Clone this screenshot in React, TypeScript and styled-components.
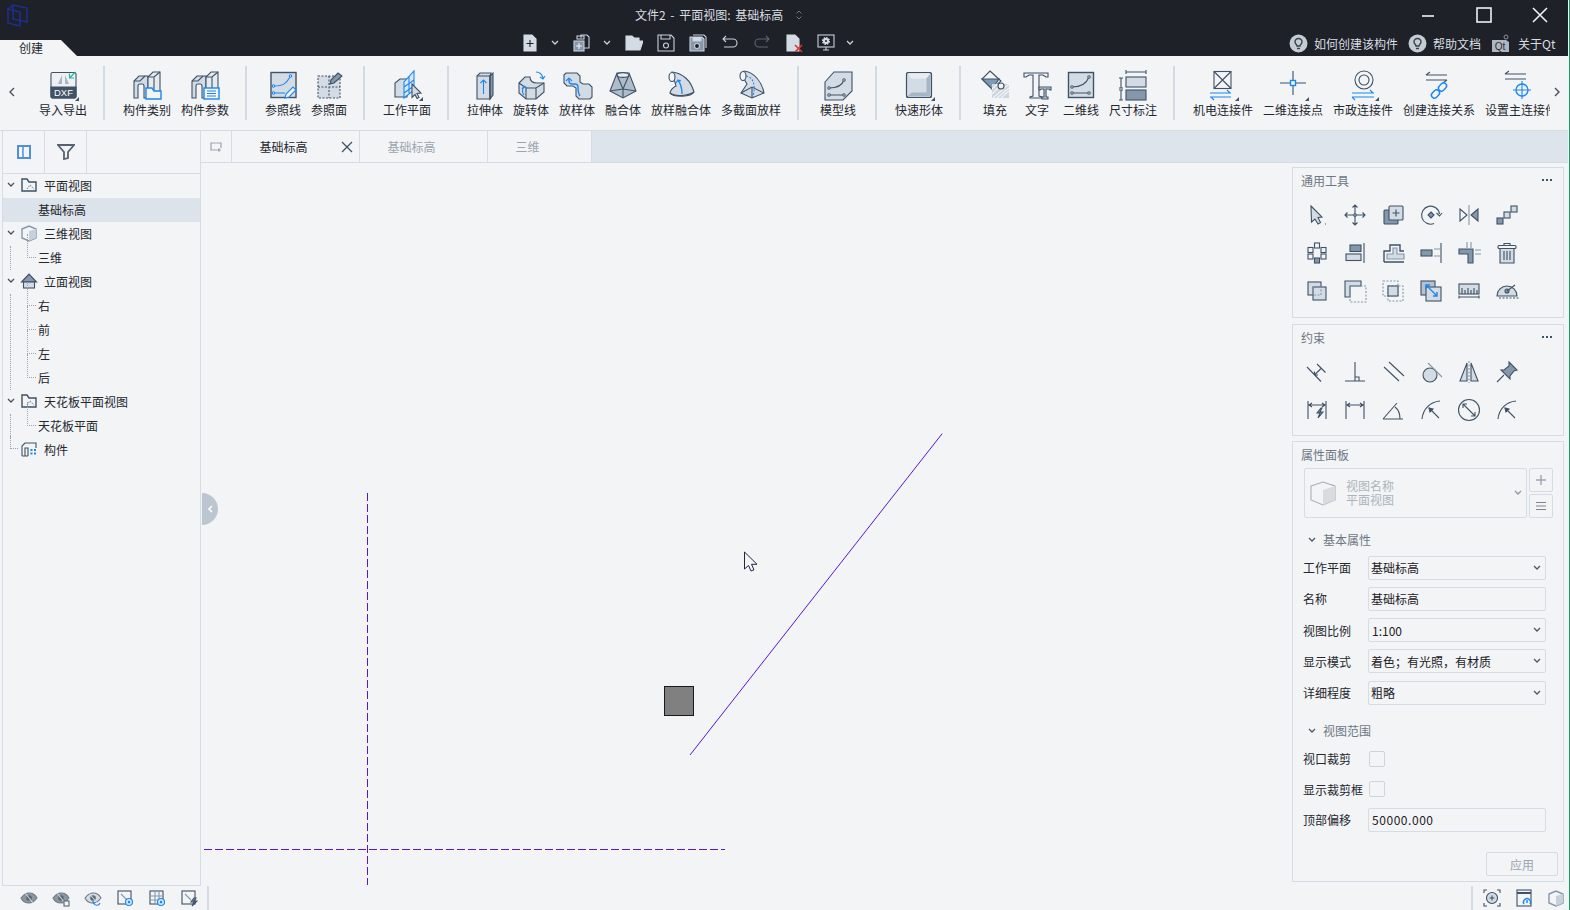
import React from "react";
import styled, { createGlobalStyle } from "styled-components";

const D = "#3f5266";
const L = "#d3dce5";
const M = "#8597aa";
const B = "#1b87f0";

const GlobalStyle = createGlobalStyle`
  html, body, #root { margin: 0; padding: 0; height: 100%; }
  body {
    background: #f3f4f6;
    color: #23282e;
    font-family: "Noto Sans CJK SC", "Liberation Sans", sans-serif;
    font-size: 12px;
    overflow: hidden;
  }
`;

const Glyph = styled.svg.attrs<{ $s?: number }>((p) => ({
  width: p.$s ?? 24,
  height: p.$s ?? 24,
  viewBox: `0 0 ${p.$s ?? 24} ${p.$s ?? 24}`,
}))<{ $s?: number; $ink?: string }>`
  display: block;
  flex: none;
  fill: none;
  stroke: ${(p) => p.$ink ?? D};
  stroke-width: 1.1;
`;

const Big = ({ children }: { children: React.ReactNode }) => <Glyph $s={32}>{children}</Glyph>;
const Small = ({ children }: { children: React.ReactNode }) => <Glyph $s={24}>{children}</Glyph>;
const Mini = ({ children }: { children: React.ReactNode }) => <Glyph $s={18}>{children}</Glyph>;
const Dark = ({ children, dim }: { children: React.ReactNode; dim?: boolean }) => (
  <Glyph $s={18} $ink={dim ? "#5c6670" : "#c9d2dc"}>{children}</Glyph>
);
const More = () => <path d="M32 28v4h-4z" fill={D} stroke="none" />;

/* ribbon icons */
const Blocks = () => (
  <>
    <path d="M3 29V12l5-5h9v22h-4V17a2 2 0 0 0-2-2H9a2 2 0 0 0-2 2v12z" fill={L} />
    <path d="M17 29V8l5-5h7v23" fill="#e6ebf0" />
    <path d="M3 12h6l5-5M17 8h6l6-5M23 8v14" />
  </>
);
const IcDxf = () => (
  <Big>
    <rect x="4" y="3.5" width="25" height="25.5" rx="1.5" fill="#eef1f4" />
    <path d="M4 18h25v9.5a1.5 1.5 0 0 1-1.5 1.5h-22A1.5 1.5 0 0 1 4 27.5z" fill={D} />
    <text x="16.5" y="27" fontSize="9.5" fill="#fff" stroke="none" textAnchor="middle" fontFamily="Liberation Sans">DXF</text>
    <path d="M15 6l-4 9h4zM18 6l4 9h-4z" fill="#aab6c2" stroke="none" />
    <path d="M28.5 3l-6 6m0-4.5V9h4.5" stroke="#22b59b" fill="#eef1f4" />
    <More />
  </Big>
);
const IcCategory = () => (
  <Big>
    <Blocks />
    <path d="M15 30V19h6l2 3h7v8z" fill="#f3f4f6" stroke={B} strokeWidth="1.4" />
  </Big>
);
const IcParams = () => (
  <Big>
    <Blocks />
    <rect x="15" y="19" width="15" height="11" fill="#f3f4f6" stroke={B} strokeWidth="1.4" />
    <path d="M18 22h9M18 24.5h9M18 27h9" stroke={B} />
  </Big>
);
const IcRefLine = () => (
  <Big>
    <rect x="4" y="3.5" width="25" height="25" fill={L} strokeWidth="1.4" />
    <path d="M7 17c9 0 12-2 16-9M7 24h11" stroke={B} />
    <circle cx="6.5" cy="17" r="1.2" fill="#fff" stroke={B} />
    <circle cx="6.5" cy="24" r="1.2" fill="#fff" stroke={B} />
    <circle cx="23.5" cy="7" r="1.2" fill="#fff" stroke={B} />
    <path d="M18 29l1-4 7-7 3 3-7 7z" fill="#f3f4f6" stroke={B} />
  </Big>
);
const IcRefFace = () => (
  <Big>
    <rect x="5" y="7" width="22" height="22" fill={L} strokeDasharray="2 1.5" />
    <path d="M5 18h22M16 7v22" strokeDasharray="2 1.5" />
    <path d="M18 11l7-7 4 3-8 7-4 1z" fill={M} />
  </Big>
);
const IcWorkPlane = () => (
  <Big>
    <path d="M4 28V14l5-4h7v18z" fill={L} />
    <path d="M13 29V13L23 2v19l-10 8zM18 7v17M13 18l10-7M13 24l10-7" fill="#d8e8f8" stroke={B} />
    <path d="M21 15l9 9-4 .5 2 4-2 1-2-4-3 3z" fill={L} />
    <More />
  </Big>
);
const IcExtrude = () => (
  <Big>
    <path d="M8 30V7l3-3h11l-1 3v23z" fill={L} />
    <path d="M21 7l3-3v22l-3 4z" fill={M} />
    <path d="M8 7h13M21 7v23" />
    <path d="M14.5 25V11m-3 3l3-3 3 3" stroke={B} />
  </Big>
);
const IcRevolve = () => (
  <Big>
    <path d="M4 14l6-6h5c0 4 3 6 7 6h7v9l-8 7H11l-7-6z" fill={L} />
    <path d="M4 14l7 5h10l8-5M21 19v11M11 19v11" />
    <path d="M21 3c4 0 6 2 7 6m-3-1l3 2 2-3M9 26c-2-2-2-6 0-8m-2 2l2-3 3 2" stroke={B} />
  </Big>
);
const IcSweep = () => (
  <Big>
    <path d="M3 6l2-2h11l3 3v6l3 2h6l3 3v10l-2 2H18l-3-3v-8l-3-2H6l-3-3z" fill={L} />
    <path d="M8 9v3c0 2 1 3 3 3h3c2 0 3 1 3 3 0 2 0 6 2 9" stroke={B} strokeWidth="1.4" />
    <path d="M5 12l3-3 3 3" stroke={B} />
  </Big>
);
const IcBlend = () => (
  <Big>
    <path d="M10 4h12l7 18-13 7-13-7z" fill="#aebccb" />
    <ellipse cx="16" cy="6" rx="6" ry="2.4" fill="#e6ebf0" />
    <path d="M10 6L16 20l6-14M3 22l13-2 13 2M16 20v9" />
  </Big>
);
const IcSweepBlend = () => (
  <Big>
    <path d="M7 3c11 1 19 9 22 20-3 5-20 6-24 1 1-4 4-6 6-7z" fill={L} />
    <ellipse cx="7" cy="8" rx="3" ry="4.5" fill="#f3f4f6" />
    <path d="M5 24c5 4 18 3 24-1" />
    <path d="M17 25c0-6-1-10-4-14m-2 3l2-3 3 1" stroke={B} strokeWidth="1.3" />
  </Big>
);
const IcMultiSweep = () => (
  <Big>
    <path d="M9 2c10 1 18 11 20 22l-12 5-11-5 6-9-6-10z" fill={L} />
    <ellipse cx="8" cy="7" rx="3" ry="4.5" fill="#f3f4f6" />
    <path d="M17 29V18M6 24l11-6 12 6" />
    <path d="M11 7c7 1 10 8 7 21" stroke={B} strokeDasharray="2 1.5" />
  </Big>
);
const IcModelLine = () => (
  <Big>
    <path d="M3 13l9-10h18v19l-9 9H3z" fill={L} />
    <path d="M7 19c8 0 13-2 15-8M7 26h15" />
    <circle cx="7" cy="19" r="1.2" fill="#fff" />
    <circle cx="22" cy="11" r="1.2" fill="#fff" />
    <circle cx="7" cy="26" r="1.2" fill="#fff" />
    <circle cx="22" cy="26" r="1.2" fill="#fff" />
  </Big>
);
const IcQuick = () => (
  <Big>
    <rect x="3.5" y="3.5" width="25" height="25" rx="2" fill={L} />
    <path d="M4.500 4.500h23l-4 5H8.500z" fill="#e9edf1" stroke="none" />
    <path d="M23.500 9.500l4-5v23l-4-4z" fill="#a7b6c6" stroke="none" />
    <path d="M4.500 27.500l4-4h15l4 4z" fill="#a7b6c6" stroke="none" />
    <rect x="3.500" y="3.500" width="25" height="25" rx="2" />
    <More />
  </Big>
);
const IcFill = () => (
  <Big>
    <path d="M11 2l11 10-9 8L3 10z" fill="#f3f4f6" />
    <path d="M3 10h17l-7 10z" fill="#7f9ab8" />
    <path d="M13 29h17V15H13z" fill="#cdd5de" stroke="none" />
    <path d="M14 29l16-14M18 29l12-10M22 29l8-7M13 25l10-10M13 20l5-5" stroke="#f3f4f6" />
    <circle cx="22" cy="17" r="3" fill="#f3f4f6" />
  </Big>
);
const IcText = () => (
  <Big>
    <path d="M3 8V4h24v4h-2l-3-2h-4v21l3 1v1H9v-1l3-1V6H8L5 8z" fill="#f3f4f6" />
    <path d="M18 18h12v3h-1l-1-1h-3v8h2v2h-6v-2h2v-8h-3l-1 1h-1z" fill={L} />
  </Big>
);
const IcLine2d = () => (
  <Big>
    <rect x="3.5" y="3.5" width="25" height="25" fill={L} strokeWidth="1.4" />
    <path d="M7 18c8 0 14-2 17-10M7 24h17" />
    <circle cx="7" cy="18" r="1.2" fill="#fff" />
    <circle cx="24" cy="8" r="1.2" fill="#fff" />
    <circle cx="7" cy="24" r="1.2" fill="#fff" />
    <circle cx="24" cy="24" r="1.2" fill="#fff" />
  </Big>
);
const IcDimension = () => (
  <Big>
    <path d="M9 3h20M9 1v4M29 1v4M2 9h4M2 19h4M2 21h4M2 31h4M4 9v10M4 21v10" />
    <rect x="9" y="8" width="20" height="10" fill={L} />
    <rect x="9" y="21" width="20" height="10" fill={M} />
  </Big>
);
const IcMep = () => (
  <Big>
    <rect x="7" y="2.5" width="17" height="17" fill="#f3f4f6" />
    <path d="M7 2.500l17 17M24 2.500l-17 17" />
    <path d="M3 24h21M3 28h21M20 21l3 3M7 31l-3-3" stroke={B} />
    <More />
  </Big>
);
const IcPoint2d = () => (
  <Big>
    <path d="M16 2v24M3 14h26" />
    <rect x="13.5" y="11.5" width="5" height="5" fill="#f3f4f6" stroke={B} strokeWidth="1.4" />
    <More />
  </Big>
);
const IcCivil = () => (
  <Big>
    <circle cx="17" cy="11" r="9" fill="#f3f4f6" />
    <circle cx="17" cy="11" r="5" />
    <path d="M5 24h22M5 28h22M23 21l3 3M8 31l-3-3" stroke={B} />
    <More />
  </Big>
);
const IcLink = () => (
  <Big>
    <path d="M3 6h21M3 11h21M3 6l4-3M24 11l-4 3" />
    <g stroke={B} strokeWidth="1.4">
      <rect x="8" y="22" width="9" height="6" rx="3" transform="rotate(-45 12.5 25)" />
      <rect x="15" y="15" width="9" height="6" rx="3" transform="rotate(-45 19.5 18)" />
    </g>
  </Big>
);
const IcMain = () => (
  <Big>
    <path d="M3 5h21M3 10h21M3 5l4-3" />
    <circle cx="20" cy="21" r="6" stroke={B} strokeWidth="1.4" />
    <path d="M20 12v18M11 21h18" stroke={B} />
  </Big>
);

/* tool palette icons */
const TSelect = () => (
  <Small>
    <path d="M6 3l11 11-4 .5 2.500 5-2.500 1.500-3-5-3.500 3z" fill={L} />
    <path d="M20 21h1" />
  </Small>
);
const TMove = () => (
  <Small>
    <path d="M12 2v20M2 12h20M9.500 4.500L12 2l2.500 2.500M9.500 19.500L12 22l2.500-2.500M4.500 9.500L2 12l2.500 2.500M19.500 9.500L22 12l-2.500 2.500" />
    <circle cx="12" cy="12" r="1.300" fill={L} />
  </Small>
);
const TCopy = () => (
  <Small>
    <rect x="3" y="7" width="14" height="14" rx="1" fill={M} />
    <rect x="8" y="3" width="14" height="14" rx="1" fill={L} />
    <path d="M15 6.500v7M11.500 10h7" />
  </Small>
);
const TRotate = () => (
  <Small>
    <path d="M15 20.500A9 9 0 1 1 20.500 11" />
    <path d="M17.500 10l3 3 2.500-3" />
    <path d="M12 9l3 3-3 3-3-3z" fill={M} />
  </Small>
);
const TMirror = () => (
  <Small>
    <path d="M12 2v20" stroke={M} />
    <path d="M3 6v12l7-6z" />
    <path d="M21 6v12l-7-6z" fill={M} />
  </Small>
);
const TDiag = () => (
  <Small>
    <rect x="2" y="15" width="6" height="6" fill={M} />
    <rect x="9" y="9" width="6" height="6" fill={L} />
    <rect x="16" y="3" width="6" height="6" fill={L} />
  </Small>
);
const TCircle = () => (
  <Small>
    <rect x="9.500" y="2" width="5" height="5" fill="#f3f4f6" />
    <rect x="3" y="6.500" width="5" height="5" fill="#f3f4f6" />
    <rect x="3" y="13" width="5" height="5" fill="#f3f4f6" />
    <rect x="16" y="6.500" width="5" height="5" fill="#f3f4f6" />
    <rect x="16" y="13" width="5" height="5" fill="#f3f4f6" />
    <rect x="9.500" y="17" width="5" height="5" fill={M} />
  </Small>
);
const TAlign = () => (
  <Small>
    <path d="M21 2v20" />
    <rect x="7" y="4" width="11" height="6.500" fill={M} />
    <rect x="3" y="13" width="15" height="6.500" fill={L} />
  </Small>
);
const TOffset = () => (
  <Small>
    <path d="M3 21V10h6V4h10v6h4M3 21h20" strokeWidth="1.400" />
    <path d="M6 18v-5h6V7h4v6h7v5z" fill={L} stroke={M} />
  </Small>
);
const TTrim = () => (
  <Small>
    <rect x="2" y="9" width="11" height="6" fill={M} />
    <path d="M15 8h6M15 15h6" stroke={M} />
    <path d="M22 2v20" />
  </Small>
);
const TCorner = () => (
  <Small>
    <path d="M2 8h14v14h-5V13H2z" fill={M} />
    <path d="M10 1v6M14 1v6M18 9h6M18 13h6" stroke={M} />
  </Small>
);
const TTrash = () => (
  <Small>
    <path d="M5 7v15h14V7" fill={L} />
    <rect x="3" y="4.500" width="18" height="3" rx="1" fill="#f3f4f6" />
    <path d="M9 4.500V2.500h6v2M9 10v9M12 10v9M15 10v9" />
  </Small>
);
const TUnion = () => (
  <Small>
    <rect x="3" y="3" width="13" height="13" fill={L} />
    <rect x="8" y="8" width="13" height="13" fill={L} />
    <rect x="8" y="8" width="8" height="8" stroke={M} strokeDasharray="2 1.500" />
  </Small>
);
const TSubtract = () => (
  <Small>
    <path d="M2 2h16v5H7v11H2z" fill={L} />
    <rect x="7" y="7" width="16" height="16" stroke={M} strokeDasharray="2 1.500" />
  </Small>
);
const TIntersect = () => (
  <Small>
    <rect x="2" y="2" width="15" height="15" stroke={M} strokeDasharray="2 1.500" />
    <rect x="7" y="7" width="15" height="15" stroke={M} strokeDasharray="2 1.500" />
    <rect x="7" y="7" width="10" height="10" fill={L} />
  </Small>
);
const TScale = () => (
  <Small>
    <rect x="2" y="2" width="14" height="14" fill="#b5c1ce" />
    <rect x="7" y="8" width="15" height="14" fill={L} />
    <path d="M7 6l11 11M7 10V6h4M18 13v4h-4" stroke={B} strokeWidth="1.400" />
  </Small>
);
const TRuler = () => (
  <Small>
    <rect x="2" y="5" width="20" height="10" fill={L} />
    <path d="M5 9v6M8 11v4M11 9v6M14 11v4M17 9v6M20 11v4" />
    <path d="M2 18h20M2 16.500v3M22 16.500v3" />
  </Small>
);
const TProtractor = () => (
  <Small>
    <path d="M2 17a10 10 0 0 1 20 0z" fill={L} />
    <circle cx="12" cy="12" r="2" fill={M} />
    <path d="M4 19h20" strokeDasharray="2 1.500" />
    <path d="M12 12L20 6" />
  </Small>
);
const CParallelDim = () => (
  <Small>
    <path d="M2 7l14 14.500M12 4l8.500 8.500M9.500 15l6.500-6.500M9.500 15h3.500M9.500 15v-3.500" />
  </Small>
);
const CPerp = () => (
  <Small>
    <path d="M2 21h20M12 2v19M12 17h4v4" />
  </Small>
);
const CParallel = () => (
  <Small>
    <path d="M3 7l15 14M8 2l15 14" />
  </Small>
);
const CTangent = () => (
  <Small>
    <circle cx="11" cy="15" r="7" fill={L} />
    <path d="M9 3l14 14" stroke={M} />
  </Small>
);
const CSymmetry = () => (
  <Small>
    <path d="M10 3v18H3z" fill={L} />
    <path d="M14 3v18h7z" fill={L} />
    <path d="M12 1v22" stroke={M} strokeDasharray="2 1.500" />
  </Small>
);
const CPin = () => (
  <Small>
    <path d="M14 2l8 8-3 1-4 5 0 3-9-9 3 0 5-4z" fill={M} />
    <path d="M9 15l-7 7" />
  </Small>
);
const CDimLock = () => (
  <Small>
    <path d="M3 3v18M21 3v18M4 7h16M7 5L4 7l3 2M17 5l3 2-3 2" />
    <path d="M16 10l-4 5h3l-2 5 5-6h-3l2-4z" fill={M} />
  </Small>
);
const CDim = () => (
  <Small>
    <path d="M3 3v18M21 3v18M4 7h16M7 5L4 7l3 2M17 5l3 2-3 2" />
  </Small>
);
const CAngle = () => (
  <Small>
    <path d="M2 21h20M2 21L16 5M14 9c4 3 5 7 5 12" />
  </Small>
);
const CRadius = () => (
  <Small>
    <path d="M3 21C4 11 11 4 21 3" />
    <path d="M10 10l10 10" />
    <path d="M10 10l4 1-3 3z" fill={D} />
  </Small>
);
const CDiameter = () => (
  <Small>
    <circle cx="12" cy="12" r="10.500" />
    <path d="M6 6l12 12M6 10V6h4M18 14v4h-4" />
  </Small>
);

/* tree, sidebar and status icons */
const TreeFolder = () => (
  <Mini>
    <path d="M2 15V3h5l2 3h7v9z" fill="#f3f4f6" strokeWidth="1.400" />
    <path d="M7 13l3-4 4 4" strokeDasharray="1.500 1" stroke={M} />
  </Mini>
);
const TreeCube = () => (
  <Mini>
    <path d="M2 5l7-3 7 3v9l-7 3-7-3z" fill="#f3f4f6" stroke={M} strokeWidth="1.400" />
    <path d="M9 7l7-2v9l-7 3z" fill="#c5d0db" stroke="none" />
  </Mini>
);
const TreeHouse = () => (
  <Mini>
    <path d="M1.500 10L9 2l7.500 8z" fill={M} />
    <rect x="3.500" y="10" width="11" height="6" fill={L} />
  </Mini>
);
const TreeParts = () => (
  <Mini>
    <path d="M2 16V6l3-3h11v5" fill="#f3f4f6" />
    <path d="M5 16V8h3v8M2 16h6" />
    <path d="M10.500 9h2v2h-2zM14 9h2v2h-2zM10.500 12.500h2v2h-2zM14 12.500h2v2h-2z" fill={B} stroke="none" />
  </Mini>
);
const EyeBase = ({ shade }: { shade?: boolean }) => (
  <>
    <path d="M1 9c3-4 6-5 8-5s6 1 8 5c-3 4-6 5-8 5s-6-1-8-5z" fill={shade ? "#8a96a2" : L} stroke="#6f7b87" />
    <circle cx="9" cy="9" r="2.800" fill="#5b6672" stroke="none" />
    <path d="M5 4l8 10" stroke="#cfd6dd" />
  </>
);
const Bulb = () => (
  <svg width="19" height="19" viewBox="0 0 19 19">
    <circle cx="9.500" cy="9.500" r="9" fill="#c4ccd4" />
    <path d="M6 8a3.500 3.500 0 0 1 7 0c0 2-2 2.500-2 4H8c0-1.500-2-2-2-4z" fill="none" stroke="#39424c" strokeWidth="1.400" />
    <path d="M8 14.500h3" stroke="#39424c" strokeWidth="1.400" />
  </svg>
);

const ribbonGroups: { extra: number; items: { label: string; w: number; icon: React.FC; clip?: boolean }[] }[] = [
  { extra: 0, items: [{ label: "导入导出", w: 48, icon: IcDxf }] },
  {
    extra: 1,
    items: [
      { label: "构件类别", w: 48, icon: IcCategory },
      { label: "构件参数", w: 48, icon: IcParams },
    ],
  },
  {
    extra: 1,
    items: [
      { label: "参照线", w: 36, icon: IcRefLine },
      { label: "参照面", w: 36, icon: IcRefFace },
    ],
  },
  { extra: 1, items: [{ label: "工作平面", w: 48, icon: IcWorkPlane }] },
  {
    extra: 1,
    items: [
      { label: "拉伸体", w: 36, icon: IcExtrude },
      { label: "旋转体", w: 36, icon: IcRevolve },
      { label: "放样体", w: 36, icon: IcSweep },
      { label: "融合体", w: 36, icon: IcBlend },
      { label: "放样融合体", w: 60, icon: IcSweepBlend },
      { label: "多截面放样", w: 60, icon: IcMultiSweep },
    ],
  },
  { extra: 1, items: [{ label: "模型线", w: 42, icon: IcModelLine }] },
  { extra: 1, items: [{ label: "快速形体", w: 48, icon: IcQuick }] },
  {
    extra: 1,
    items: [
      { label: "填充", w: 32, icon: IcFill },
      { label: "文字", w: 32, icon: IcText },
      { label: "二维线", w: 36, icon: IcLine2d },
      { label: "尺寸标注", w: 48, icon: IcDimension },
    ],
  },
  {
    extra: 1,
    items: [
      { label: "机电连接件", w: 60, icon: IcMep },
      { label: "二维连接点", w: 60, icon: IcPoint2d },
      { label: "市政连接件", w: 60, icon: IcCivil },
      { label: "创建连接关系", w: 72, icon: IcLink },
      { label: "设置主连接件", w: 65, icon: IcMain, clip: true },
    ],
  },
];

const general = [TSelect, TMove, TCopy, TRotate, TMirror, TDiag, TCircle, TAlign, TOffset, TTrim, TCorner, TTrash, TUnion, TSubtract, TIntersect, TScale, TRuler, TProtractor];
const constraints = [CParallelDim, CPerp, CParallel, CTangent, CSymmetry, CPin, CDimLock, CDim, CAngle, CRadius, CDiameter, CRadius];

const Page = styled.div`
  width: 1570px;
  height: 910px;
  display: flex;
  flex-direction: column;
  border-right: 1px solid #1d9a68;
  padding-right: 1px;
  box-sizing: border-box;
  overflow: hidden;
`;

/* title bar */
const TitleBar = styled.header`
  flex: none;
  height: 56px;
  background: #1e2127;
  color: #d9dee3;
`;
const TopRow = styled.div`
  height: 30px;
  display: flex;
  align-items: center;
`;
const Logo = styled.svg`
  width: 22px;
  height: 24px;
  margin: 0 0 0 6px;
  flex: none;
  fill: none;
  stroke: #1c2f8c;
  stroke-width: 1.5;
`;
const TitleText = styled.div`
  margin-left: 607px;
  line-height: 30px;
  white-space: nowrap;
  word-spacing: 2px;
`;
const UpDown = styled.svg`
  width: 8px;
  height: 12px;
  margin-left: 12px;
  fill: none;
  stroke: #6e7680;
  stroke-width: 1;
`;
const WindowControls = styled.div`
  margin-left: auto;
  display: flex;
`;
const WinButton = styled.div`
  width: 56px;
  height: 30px;
  display: flex;
  align-items: center;
  justify-content: center;
  svg {
    fill: none;
    stroke: #eef0f2;
    stroke-width: 1.6;
  }
`;
const BottomRow = styled.div`
  height: 26px;
  display: flex;
  align-items: flex-end;
`;
const AppTab = styled.div`
  width: 77px;
  height: 16px;
  margin-right: 437px;
  flex: none;
  background: #f3f4f6;
  color: #23282e;
  clip-path: polygon(0 0, 61px 0, 77px 100%, 0 100%);
  line-height: 16px;
  padding-left: 19px;
  box-sizing: border-box;
`;
const QuickBar = styled.div`
  display: flex;
  height: 26px;
  align-items: center;
`;
const QuickButton = styled.div<{ $w?: number }>`
  width: ${(p) => p.$w ?? 32}px;
  display: flex;
  justify-content: center;
`;
const QuickChevron = styled(QuickButton)`
  box-sizing: border-box;
  padding-right: 3px;
`;
const HelpLinks = styled.div`
  margin-left: auto;
  height: 26px;
  display: flex;
  align-items: center;
  width: 279px;
  flex: none;
  white-space: nowrap;
  overflow: hidden;
`;
const HelpLink = styled.div<{ $icon?: number }>`
  display: flex;
  align-items: center;
  gap: ${(p) => p.$icon ?? 6}px;
  margin-right: 10px;
  color: #d9dee3;
`;

/* ribbon */
const Ribbon = styled.nav`
  flex: none;
  height: 75px;
  position: relative;
  display: flex;
  padding-left: 5px;
  box-sizing: border-box;
  border-bottom: 1px solid #d4dce5;
  overflow: hidden;
`;
const RibbonArrow = styled.div`
  flex: none;
  width: 14px;
  margin-right: 20px;
  display: flex;
  align-items: center;
  justify-content: center;
  height: 72px;
`;
const RibbonArrowRight = styled(RibbonArrow)`
  position: absolute;
  right: 4px;
  top: 0;
  margin: 0;
`;
const RibbonGroup = styled.div`
  display: flex;
  gap: 10px;
  flex: none;
`;
const RibbonDivider = styled.div<{ $extra: number }>`
  flex: none;
  width: 2px;
  height: 54px;
  margin: 10px ${(p) => 17 + p.$extra}px 0 16px;
  background: #d2dae4;
`;
const RibbonItem = styled.div<{ $w: number; $clip?: boolean }>`
  width: ${(p) => p.$w}px;
  flex: none;
  display: flex;
  flex-direction: column;
  align-items: center;
  padding-top: 13px;
  overflow: ${(p) => (p.$clip ? "hidden" : "visible")};
`;
const RibbonLabel = styled.div<{ $clip?: boolean }>`
  line-height: 18px;
  white-space: nowrap;
  width: 100%;
  display: flex;
  justify-content: ${(p) => (p.$clip ? "flex-start" : "center")};
`;

/* main */
const Main = styled.div`
  flex: 1;
  min-height: 0;
  display: flex;
`;
const Sidebar = styled.aside`
  flex: none;
  width: 199px;
  margin-left: 2px;
  border-right: 1px solid #d4dce5;
  border-bottom: 1px solid #d4dce5;
  border-left: 1px solid #d4dce5;
  box-sizing: border-box;
`;
const SideTabs = styled.div`
  height: 42px;
  display: flex;
  border-bottom: 1px solid #d4dce5;
`;
const SideTab = styled.div`
  width: 41px;
  border-right: 1px solid #d4dce5;
  display: flex;
  align-items: center;
  justify-content: center;
`;
const TreeGroup = styled.div<{ $guide?: number }>`
  position: relative;
  &::before {
    content: "";
    position: absolute;
    left: 7px;
    top: 24px;
    height: ${(p) => p.$guide ?? 0}px;
    border-left: 1px dotted #9aa4ae;
  }
`;
const TreeHead = styled.div`
  height: 24px;
  display: flex;
  align-items: center;
  padding: 0 0 2px 4px;
  box-sizing: border-box;
`;
const Caret = styled.svg`
  width: 8px;
  height: 6px;
  margin-right: 5px;
  flex: none;
  fill: none;
  stroke: #46525e;
  stroke-width: 1.300;
`;
const TreeBranch = styled.div`
  width: 8px;
  height: 14px;
  margin: -14px 2px 0 3px;
  flex: none;
  border-left: 1px dotted #9aa4ae;
  border-bottom: 1px dotted #9aa4ae;
  box-sizing: border-box;
`;
const TreeIcon = styled.div`
  width: 18px;
  margin-right: 6px;
`;
const TreeLeaf = styled.div<{ $active?: boolean; $line?: boolean }>`
  height: 24px;
  line-height: 24px;
  padding-left: 35px;
  position: relative;
  background: ${(p) => (p.$active ? "#dde3ea" : "transparent")};
  &::before {
    content: "";
    display: ${(p) => (p.$line ? "block" : "none")};
    position: absolute;
    left: 24px;
    top: -12px;
    width: 9px;
    height: 24px;
    border-left: 1px dotted #9aa4ae;
    border-bottom: 1px dotted #9aa4ae;
    box-sizing: border-box;
  }
`;

const Content = styled.div`
  flex: 1;
  min-width: 0;
  display: flex;
  flex-direction: column;
`;
const TabBar = styled.div`
  flex: none;
  height: 32px;
  display: flex;
  background: #dee4eb;
  box-sizing: border-box;
  border-bottom: 1px solid #d4dce5;
`;
const TabCell = styled.div<{ $w: number; $on?: boolean }>`
  width: ${(p) => p.$w}px;
  flex: none;
  position: relative;
  padding-right: ${(p) => (p.$w > 40 ? 24 : 0)}px;
  box-sizing: border-box;
  display: flex;
  align-items: center;
  justify-content: center;
  background: #f3f4f6;
  border-right: 1px solid #d4dce5;
  color: ${(p) => (p.$on ? "#23282e" : "#9aa5b0")};
`;
const TabClose = styled.svg`
  position: absolute;
  right: 6px;
  top: 10px;
  width: 12px;
  height: 12px;
  stroke: #3f5266;
  stroke-width: 1.300;
`;
const Workspace = styled.div`
  flex: 1;
  min-height: 0;
  display: flex;
`;
const Canvas = styled.main`
  flex: 1;
  position: relative;
  min-width: 0;
`;
const Drawing = styled.svg`
  position: absolute;
  inset: 0;
  width: 100%;
  height: 100%;
`;
const CollapseHandle = styled.div`
  position: absolute;
  left: 1px;
  top: 330px;
  width: 16px;
  height: 32px;
  border-radius: 0 16px 16px 0;
  background: #bcc6d0;
  display: flex;
  align-items: center;
  justify-content: center;
`;

/* right panel */
const RightPanel = styled.aside`
  flex: none;
  width: 276px;
  padding: 4px 4px 4px 0;
  box-sizing: border-box;
  display: flex;
  flex-direction: column;
`;
const Card = styled.section<{ $h?: number; $top?: number }>`
  flex: ${(p) => (p.$h ? "none" : "1")};
  height: ${(p) => (p.$h ? `${p.$h}px` : "auto")};
  margin-top: ${(p) => p.$top ?? 0}px;
  min-height: 0;
  border: 1px solid #d4dce5;
  box-sizing: border-box;
  display: flex;
  flex-direction: column;
`;
const CardTitle = styled.div`
  height: 28px;
  padding: 0 11px 4px 8px;
  box-sizing: border-box;
  flex: none;
  display: flex;
  align-items: center;
  justify-content: space-between;
  color: #6d7884;
`;
const Dots = styled.div`
  display: flex;
  gap: 2px;
  span {
    width: 2px;
    height: 2px;
    background: #3f5266;
  }
`;
const ToolGrid = styled.div`
  display: grid;
  grid-template-columns: repeat(6, 38px);
  grid-auto-rows: 38px;
  padding-left: 5px;
`;
const Tool = styled.div`
  display: flex;
  align-items: center;
  justify-content: center;
`;
const PropBody = styled.div`
  flex: 1;
  display: flex;
  flex-direction: column;
  margin-top: -2px;
  padding: 0 5px 5px 10px;
  min-height: 0;
`;
const ViewPicker = styled.div`
  display: flex;
  gap: 2px;
  margin-left: 1px;
  margin-right: 5px;
`;
const ViewBox = styled.div`
  flex: 1;
  height: 50px;
  border: 1px solid #d4dce5;
  border-radius: 2px;
  box-sizing: border-box;
  display: flex;
  align-items: center;
  padding: 0 4px;
  gap: 9px;
  color: #acb4bc;
  line-height: 14px;
`;
const ViewName = styled.div`
  flex: 1;
`;
const ViewButtons = styled.div`
  display: flex;
  flex-direction: column;
  gap: 2px;
`;
const ViewButton = styled.div`
  width: 24px;
  height: 24px;
  border: 1px solid #d4dce5;
  border-radius: 2px;
  box-sizing: border-box;
  display: flex;
  align-items: center;
  justify-content: center;
`;
const Section = styled.div<{ $top: number }>`
  margin-top: ${(p) => p.$top}px;
  height: 25px;
  flex: none;
  display: flex;
  align-items: center;
  gap: 7px;
  padding-left: 5px;
  color: #6d7884;
`;
const PropRow = styled.div<{ $h: number }>`
  height: ${(p) => p.$h}px;
  flex: none;
  display: grid;
  grid-template-columns: 65px 178px;
  align-items: center;
`;
const Field = styled.div`
  height: 24px;
  border: 1px solid #d4dce5;
  border-radius: 2px;
  box-sizing: border-box;
  padding: 0 4px 0 2px;
  display: flex;
  align-items: center;
  justify-content: space-between;
  color: #1d2126;
`;
const NumberText = styled.span<{ $track?: number }>`
  padding-left: 1px;
  letter-spacing: ${(p) => p.$track ?? 0}px;
`;
const Check = styled.div`
  width: 16px;
  height: 16px;
  margin-left: 1px;
  border: 1px solid #ccd4dd;
  border-radius: 2px;
  box-sizing: border-box;
`;
const ApplyButton = styled.div`
  margin-top: auto;
  align-self: flex-end;
  width: 72px;
  height: 24px;
  border: 1px solid #d4dce5;
  border-radius: 2px;
  box-sizing: border-box;
  display: flex;
  align-items: center;
  justify-content: center;
  color: #9aa5b0;
`;

/* status bar */
const StatusBar = styled.footer`
  flex: none;
  height: 24px;
  display: flex;
  align-items: center;
`;
const StatusLeft = styled.div`
  width: 209px;
  height: 24px;
  padding-left: 20px;
  box-sizing: border-box;
  display: flex;
  border-right: 2px solid #d2dae4;
  align-items: center;
  gap: 14px;
`;
const StatusRight = styled(StatusLeft)`
  width: 97px;
  margin-left: auto;
  border-right: 0;
  border-left: 2px solid #d2dae4;
  padding-left: 10px;
`;

const Chevron = ({ color = "#4a5866" }: { color?: string }) => (
  <svg width="8" height="6" viewBox="0 0 8 6" fill="none" stroke={color} strokeWidth="1.300">
    <path d="M1 1l3 3 3-3" />
  </svg>
);
const TreeCaret = () => (
  <Caret viewBox="0 0 8 6">
    <path d="M1 1l3 3 3-3" />
  </Caret>
);

const PlanTree = () => (
  <div>
    <TreeGroup>
      <TreeHead>
        <TreeCaret />
        <TreeIcon><TreeFolder /></TreeIcon>平面视图
      </TreeHead>
      <TreeLeaf $active>基础标高</TreeLeaf>
    </TreeGroup>
    <TreeGroup $guide={24}>
      <TreeHead>
        <TreeCaret />
        <TreeIcon><TreeCube /></TreeIcon>三维视图
      </TreeHead>
      <TreeLeaf $line>三维</TreeLeaf>
    </TreeGroup>
    <TreeGroup $guide={96}>
      <TreeHead>
        <TreeCaret />
        <TreeIcon><TreeHouse /></TreeIcon>立面视图
      </TreeHead>
      {["右", "前", "左", "后"].map((t) => (
        <TreeLeaf $line key={t}>{t}</TreeLeaf>
      ))}
    </TreeGroup>
    <TreeGroup $guide={24}>
      <TreeHead>
        <TreeCaret />
        <TreeIcon><TreeFolder /></TreeIcon>天花板平面视图
      </TreeHead>
      <TreeLeaf $line>天花板平面</TreeLeaf>
    </TreeGroup>
    <TreeHead>
      <TreeBranch />
      <TreeIcon><TreeParts /></TreeIcon>构件
    </TreeHead>
  </div>
);

export default function App() {
  return (
    <>
      <GlobalStyle />
      <Page>
        <TitleBar>
          <TopRow>
            <Logo viewBox="0 0 22 24">
              <path d="M7 2l14 3v14l-14-3zM2 6l12 3v14l-12-3zM2 6l5-4" />
            </Logo>
            <TitleText>文件2 - 平面视图: 基础标高</TitleText>
            <UpDown viewBox="0 0 8 12">
              <path d="M1.500 4.500L4 2l2.500 2.500M1.500 7.500L4 10l2.500-2.500" />
            </UpDown>
            <WindowControls>
              <WinButton>
                <svg width="14" height="14" viewBox="0 0 14 14"><path d="M1 8h12" /></svg>
              </WinButton>
              <WinButton>
                <svg width="16" height="16" viewBox="0 0 16 16"><rect x="1" y="1" width="14" height="14" /></svg>
              </WinButton>
              <WinButton>
                <svg width="16" height="16" viewBox="0 0 16 16"><path d="M1 1l14 14M15 1L1 15" /></svg>
              </WinButton>
            </WindowControls>
          </TopRow>
          <BottomRow>
            <AppTab>创建</AppTab>
            <QuickBar>
              <QuickButton>
                <Dark><path d="M3 1h8l4 4v12H3z" fill="#d3dce5" stroke="#d3dce5" /><path d="M9 6v7M5.500 9.500h7" stroke="#1e2127" /></Dark>
              </QuickButton>
              <QuickChevron $w={20}><Chevron color="#c9d2dc" /></QuickChevron>
              <QuickButton>
                <Dark><path d="M8 4V1h6l2 2v11h-5" /><rect x="4" y="2" width="7" height="3" /><rect x="1" y="7" width="10" height="10" fill="#8597aa" /><path d="M6 9v6M3 12h6" stroke="#eef1f4" /></Dark>
              </QuickButton>
              <QuickChevron $w={20}><Chevron color="#c9d2dc" /></QuickChevron>
              <QuickButton>
                <Dark><path d="M1 16V2h6l2 2h5v3H5L1 16h14l3-9H5" fill="#d3dce5" stroke="#d3dce5" /></Dark>
              </QuickButton>
              <QuickButton>
                <Dark><path d="M1 1h13l3 3v13H1z" /><path d="M4 1v4h9V1" /><circle cx="9" cy="11.500" r="2.500" /></Dark>
              </QuickButton>
              <QuickButton>
                <Dark><path d="M4 1h11l2 2v11" /><path d="M1 3h12l2 2v12H1z" fill="#8597aa" /><path d="M4 3v4h8V3" fill="#d3dce5" /><circle cx="8" cy="12" r="2.500" fill="#1e2127" /></Dark>
              </QuickButton>
              <QuickButton>
                <Dark><path d="M5 2L2 5l3 3M2 5h10a4 4 0 0 1 0 8H3" /></Dark>
              </QuickButton>
              <QuickButton>
                <Dark dim><path d="M13 2l3 3-3 3M16 5H6a4 4 0 0 0 0 8h9" /></Dark>
              </QuickButton>
              <QuickButton>
                <Dark>
                  <path d="M2 1h8l4 4v12H2z" fill="#d3dce5" stroke="#d3dce5" />
                  <path d="M10 11l7 7M17 11l-7 7" stroke="#e0342c" strokeWidth="1.600" />
                </Dark>
              </QuickButton>
              <QuickButton>
                <Dark>
                  <rect x="1" y="1" width="16" height="12" />
                  <circle cx="9" cy="7" r="3" fill="#d3dce5" stroke="#d3dce5" strokeDasharray="1.500 .8" strokeWidth="2" />
                  <circle cx="9" cy="7" r="1" fill="#1e2127" stroke="none" />
                  <path d="M6 16h6M9 13v3" />
                </Dark>
              </QuickButton>
              <QuickButton $w={16}><Chevron color="#c9d2dc" /></QuickButton>
            </QuickBar>
            <HelpLinks>
              <HelpLink><Bulb />如何创建该构件</HelpLink>
              <HelpLink><Bulb />帮助文档</HelpLink>
              <HelpLink $icon={8}>
                <svg width="19" height="19" viewBox="0 0 19 19">
                  <path d="M1 6h14l3 2v10H1z" fill="#aeb7c0" />
                  <text x="9" y="16" fontSize="10" fontFamily="Liberation Sans" fill="#2a3037" textAnchor="middle">Qt</text>
                  <circle cx="15" cy="3" r="2" fill="none" stroke="#8a939c" />
                </svg>
                关于Qt
              </HelpLink>
            </HelpLinks>
          </BottomRow>
        </TitleBar>

        <Ribbon>
          <RibbonArrow>
            <svg width="6" height="10" viewBox="0 0 6 10" fill="none" stroke="#46525e" strokeWidth="1.400"><path d="M5 1L1 5l4 4" /></svg>
          </RibbonArrow>
          {ribbonGroups.map((group, i) => (
            <React.Fragment key={i}>
              {i > 0 && <RibbonDivider $extra={group.extra} />}
              <RibbonGroup>
                {group.items.map(({ label, w, icon: Icon, clip }) => (
                  <RibbonItem key={label} $w={w} $clip={clip}>
                    <Icon />
                    <RibbonLabel $clip={clip}>{label}</RibbonLabel>
                  </RibbonItem>
                ))}
              </RibbonGroup>
            </React.Fragment>
          ))}
          <RibbonArrowRight>
            <svg width="6" height="10" viewBox="0 0 6 10" fill="none" stroke="#46525e" strokeWidth="1.400"><path d="M1 1l4 4-4 4" /></svg>
          </RibbonArrowRight>
        </Ribbon>

        <Main>
          <Sidebar>
            <SideTabs>
              <SideTab>
                <svg width="14" height="14" viewBox="0 0 14 14" fill="none" stroke="#4f8fdc" strokeWidth="2"><rect x="1" y="1" width="12" height="12" /><path d="M6 1v12" strokeWidth="1.500" /></svg>
              </SideTab>
              <SideTab>
                <svg width="18" height="16" viewBox="0 0 18 16" fill="none" stroke="#56636f" strokeWidth="1.800"><path d="M1 1h16l-6 7v6l-4 1V8z" /></svg>
              </SideTab>
            </SideTabs>
            <PlanTree />
          </Sidebar>

          <Content>
            <TabBar>
              <TabCell $w={31}>
                <svg width="12" height="10" viewBox="0 0 12 10" fill="none" stroke="#9aa5b0" strokeWidth="1.200"><path d="M7 8H1V1h10v5" /><path d="M11 8H8m1.500-1.500L8 8l1.500 1.500" /></svg>
              </TabCell>
              <TabCell $w={128} $on>
                基础标高
                <TabClose viewBox="0 0 12 12"><path d="M1 1l10 10M11 1L1 11" /></TabClose>
              </TabCell>
              <TabCell $w={128}>基础标高</TabCell>
              <TabCell $w={104}>三维</TabCell>
            </TabBar>
            <Workspace>
              <Canvas>
                <Drawing viewBox="201 163 1091 723" preserveAspectRatio="xMinYMin" fill="none">
                  <path d="M367.500 493V885" stroke="#5a14d8" strokeDasharray="8 3" />
                  <path d="M204 849.500H725" stroke="#5a14d8" strokeDasharray="8 3" />
                  <path d="M942.200 433.600L690 755" stroke="#5a14d8" />
                  <rect x="664.500" y="686.500" width="29" height="29" fill="#808080" stroke="#1a1a1a" />
                  <path d="M744.500 552v17l4-3.500 2.500 5.500 3-1.200-2.500-5.500h5.500z" fill="#f3f4f6" stroke="#1f2640" />
                </Drawing>
                <CollapseHandle>
                  <svg width="6" height="8" viewBox="0 0 6 8" fill="none" stroke="#fff" strokeWidth="1.600"><path d="M5 1L2 4l3 3" /></svg>
                </CollapseHandle>
              </Canvas>

              <RightPanel>
                <Card $h={151}>
                  <CardTitle>通用工具<Dots><span /><span /><span /></Dots></CardTitle>
                  <ToolGrid>
                    {general.map((T, i) => (<Tool key={i}><T /></Tool>))}
                  </ToolGrid>
                </Card>
                <Card $h={112} $top={6}>
                  <CardTitle>约束<Dots><span /><span /><span /></Dots></CardTitle>
                  <ToolGrid>
                    {constraints.map((T, i) => (<Tool key={i}><T /></Tool>))}
                  </ToolGrid>
                </Card>
                <Card $top={5}>
                  <CardTitle>属性面板</CardTitle>
                  <PropBody>
                    <ViewPicker>
                      <ViewBox>
                        <Glyph $s={28} $ink="#a6afb8">
                          <path d="M2 7l12-4 12 4v14l-12 5-12-5z" fill="#f3f4f6" />
                          <path d="M14 11l12-4v14l-12 5z" fill="#d8dce1" stroke="none" />
                        </Glyph>
                        <ViewName>视图名称<br />平面视图</ViewName>
                        <Chevron color="#8d97a2" />
                      </ViewBox>
                      <ViewButtons>
                        <ViewButton>
                          <svg width="12" height="12" viewBox="0 0 12 12" stroke="#9aa5b0" strokeWidth="1.400"><path d="M6 1v10M1 6h10" /></svg>
                        </ViewButton>
                        <ViewButton>
                          <svg width="12" height="12" viewBox="0 0 12 12" stroke="#7c8791" strokeWidth="1.100"><path d="M1 2.500h10M1 6h10M1 9.500h10" /></svg>
                        </ViewButton>
                      </ViewButtons>
                    </ViewPicker>
                    <Section $top={9}><Chevron />基本属性</Section>
                    <PropRow $h={31.250}><span>工作平面</span><Field>基础标高<Chevron /></Field></PropRow>
                    <PropRow $h={31.250}><span>名称</span><Field>基础标高</Field></PropRow>
                    <PropRow $h={31.250}><span>视图比例</span><Field><NumberText>1:100</NumberText><Chevron /></Field></PropRow>
                    <PropRow $h={31.250}><span>显示模式</span><Field>着色；有光照，有材质<Chevron /></Field></PropRow>
                    <PropRow $h={31.250}><span>详细程度</span><Field>粗略<Chevron /></Field></PropRow>
                    <Section $top={10}><Chevron />视图范围</Section>
                    <PropRow $h={31}><span>视口裁剪</span><Check /></PropRow>
                    <PropRow $h={30}><span>显示裁剪框</span><Check /></PropRow>
                    <PropRow $h={31}><span>顶部偏移</span><Field><NumberText $track={0.55}>50000.000</NumberText></Field></PropRow>
                    <ApplyButton>应用</ApplyButton>
                  </PropBody>
                </Card>
              </RightPanel>
            </Workspace>
          </Content>
        </Main>

        <StatusBar>
          <StatusLeft>
            <Mini><EyeBase shade /></Mini>
            <Mini><EyeBase shade /><rect x="12" y="12" width="5" height="5" fill="#f3f4f6" stroke="#5b6672" /></Mini>
            <Mini><EyeBase /><path d="M9 14c2 3 6 3 7 0M9 14v-2M9 14h2" stroke={B} /></Mini>
            <Mini><rect x="2" y="2" width="13" height="13" /><path d="M5 5l6 6" stroke={M} /><circle cx="13" cy="13" r="3.500" fill="#cfe3f8" stroke={B} /><circle cx="13" cy="13" r="1.200" fill={B} stroke="none" /></Mini>
            <Mini><rect x="2" y="2" width="13" height="13" /><path d="M2 7h13M2 11h13M7 2v13M11 2v13" stroke={M} /><circle cx="13" cy="13" r="3.500" fill="#cfe3f8" stroke={B} /><circle cx="13" cy="13" r="1.200" fill={B} stroke="none" /></Mini>
            <Mini><rect x="2" y="2" width="13" height="13" /><path d="M5 5l6 6" stroke={M} /><path d="M14 9l-3 4h3l-2 4 5-5h-3l2-3z" fill={M} /></Mini>
          </StatusLeft>
          <StatusRight>
            <Mini><circle cx="9" cy="9" r="5.500" fill={L} /><path d="M9 6.500v5M6.500 9h5M1 4V1h3M14 1h3v3M17 14v3h-3M4 17H1v-3" /></Mini>
            <Mini><rect x="2" y="1" width="14" height="16" fill="#f3f4f6" /><path d="M2 4h14" strokeWidth="2" /><path d="M9 15a3.500 3.500 0 1 1 6 0M12 11v3" stroke={B} strokeWidth="1.500" /></Mini>
            <Mini><path d="M2 5l7-3 7 3v9l-7 3-7-3z" fill="#f3f4f6" stroke={M} strokeWidth="1.400" /><path d="M9 7l7-2v9l-7 3z" fill="#c5d0db" stroke="none" /></Mini>
          </StatusRight>
        </StatusBar>
      </Page>
    </>
  );
}
